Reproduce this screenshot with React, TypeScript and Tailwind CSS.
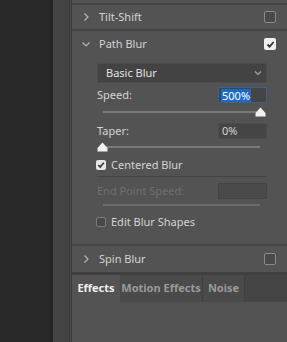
import React from "react";

function Chevron({ open }: { open?: boolean }) {
  return open ? (
    <svg width="10" height="10" viewBox="0 0 10 10" className="shrink-0">
      <path d="M1.5 3.5 L5 7 L8.5 3.5" fill="none" stroke="#b5b5b5" strokeWidth="1.2" />
    </svg>
  ) : (
    <svg width="10" height="10" viewBox="0 0 10 10" className="shrink-0">
      <path d="M3.5 1.5 L7 5 L3.5 8.5" fill="none" stroke="#b5b5b5" strokeWidth="1.2" />
    </svg>
  );
}

function HeaderBox({ checked }: { checked?: boolean }) {
  return checked ? (
    <div className="w-[12px] h-[12px] rounded-[2px] bg-[#f0f0f0] flex items-center justify-center">
      <svg width="9" height="9" viewBox="0 0 9 9">
        <path d="M1.5 4.5 L3.6 6.6 L7.6 2" fill="none" stroke="#333" strokeWidth="1.8" />
      </svg>
    </div>
  ) : (
    <div className="w-[12px] h-[12px] rounded-[2px] border border-[#8a8a8a] bg-[#4a4a4a]" />
  );
}

function SmallBox({ checked }: { checked?: boolean }) {
  return checked ? (
    <div className="w-[10px] h-[10px] rounded-[2px] bg-[#e6e6e6] flex items-center justify-center">
      <svg width="8" height="8" viewBox="0 0 8 8">
        <path d="M1.2 4 L3.2 6 L6.8 1.8" fill="none" stroke="#333" strokeWidth="1.6" />
      </svg>
    </div>
  ) : (
    <div className="w-[10px] h-[10px] rounded-[2px] border border-[#7c7c7c] bg-[#484848]" />
  );
}

function Thumb() {
  return (
    <svg width="11" height="10" viewBox="0 0 11 10" className="absolute">
      <path d="M5.5 0.5 L10.5 6 L10.5 9.5 L0.5 9.5 L0.5 6 Z" fill="#f2f2f2" />
    </svg>
  );
}

function Slider({ pos, disabled }: { pos: "start" | "end"; disabled?: boolean }) {
  return (
    <div className="relative h-[10px] ml-[6px] mr-[7px]">
      <div className={`absolute left-0 right-0 top-[1px] h-[2px] ${disabled ? "bg-[#6c6c6c]" : "bg-[#7a7a7a]"}`} />
      {!disabled && (
        <div className={`absolute top-[-3px] ${pos === "end" ? "right-[-6px]" : "left-[-6px]"} w-[11px] h-[10px]`}>
          <Thumb />
        </div>
      )}
    </div>
  );
}

export default function App() {
  return (
    <div
      className="flex w-[287px] h-[342px] overflow-hidden text-[11px] text-[#d4d4d4]"
      style={{ fontFamily: '"Noto Sans", "Open Sans", sans-serif' }}
    >
      <div className="w-[51px] bg-[#282828] shrink-0" />
      <div className="w-[2px] bg-[#222222] shrink-0" />
      <div className="w-[16px] bg-[#444444] shrink-0" />
      <div className="w-[1px] bg-[#3a3a3a] shrink-0" />
      <div className="w-[1px] bg-[#4a4a4a] shrink-0" />
      <div className="w-[1px] bg-[#3c3c3c] shrink-0" />
      <div className="flex-1 flex flex-col bg-[#535353]">
        <div className="h-[3px]" />
        <div className="h-[2px] bg-[#454545]" />
        {/* Tilt-Shift */}
        <div className="h-[24px] flex items-center pl-[9px] pr-[11px]">
          <Chevron />
          <span className="ml-[8px] flex-1">Tilt-Shift</span>
          <HeaderBox />
        </div>
        <div className="h-[2px] bg-[#454545]" />
        {/* Path Blur */}
        <div className="h-[26px] flex items-center pl-[9px] pr-[11px]">
          <Chevron open />
          <span className="ml-[8px] flex-1">Path Blur</span>
          <HeaderBox checked />
        </div>
        <div className="flex flex-col pl-[25px] pr-[20px] pt-[6px]">
          <div className="h-[20px] bg-[#434343] border border-[#4c4c4c] flex items-center pl-[8px] pr-[4px]">
            <span className="flex-1 text-[#e2e2e2]">Basic Blur</span>
            <svg width="8" height="6" viewBox="0 0 8 6">
              <path d="M1 1.5 L4 4.5 L7 1.5" fill="none" stroke="#aaa" strokeWidth="1.1" />
            </svg>
          </div>
          <div className="flex items-center justify-between mt-[4px] h-[16px]">
            <span>Speed:</span>
            <div className="w-[49px] h-[16px] bg-[#454545] border border-[#3e5f86] flex items-center pl-[2px]">
              <span className="bg-[#1b6ac9] text-white px-[1px] leading-[13px]">500%</span>
            </div>
          </div>
          <div className="mt-[7px]">
            <Slider pos="end" />
          </div>
          <div className="flex items-center justify-between mt-[3px] h-[16px]">
            <span>Taper:</span>
            <div className="w-[49px] h-[16px] bg-[#454545] border border-[#4c4c4c] flex items-center pl-[3px]">
              <span>0%</span>
            </div>
          </div>
          <div className="mt-[6px]">
            <Slider pos="start" />
          </div>
          <div className="flex items-center h-[14px] mt-[3px] ml-[-1px]">
            <SmallBox checked />
            <span className="ml-[5px]">Centered Blur</span>
          </div>
          <div className="h-[1px] bg-[#444444] mt-[4px]" />
          <div className="flex items-center justify-between mt-[6px] h-[16px]">
            <span className="text-[#6f6f6f]">End Point Speed:</span>
            <div className="w-[49px] h-[16px] bg-[#4a4a4a] border border-[#444444]" />
          </div>
          <div className="mt-[4px]">
            <Slider pos="start" disabled />
          </div>
          <div className="flex items-center h-[14px] mt-[2px] ml-[-1px]">
            <SmallBox />
            <span className="ml-[5px]">Edit Blur Shapes</span>
          </div>
        </div>
        <div className="flex-1" />
        <div className="h-[2px] bg-[#454545]" />
        {/* Spin Blur */}
        <div className="h-[26px] flex items-center pl-[9px] pr-[11px]">
          <Chevron />
          <span className="ml-[8px] flex-1">Spin Blur</span>
          <HeaderBox />
        </div>
        <div className="h-[3px] bg-[#3f3f3f]" />
        {/* Tabs */}
        <div className="h-[27px] flex bg-[#454545] font-bold">
          <div className="w-[48px] bg-[#535353] flex items-center justify-center text-[#f0f0f0]">Effects</div>
          <div className="w-[83px] bg-[#4a4a4a] flex items-center justify-center text-[#9a9a9a] border-r border-[#3e3e3e]">Motion Effects</div>
          <div className="w-[42px] bg-[#4a4a4a] flex items-center justify-center text-[#9a9a9a] border-r border-[#3e3e3e]">Noise</div>
          <div className="flex-1" />
        </div>
        <div className="h-[40px] bg-[#535353]" />
      </div>
    </div>
  );
}
